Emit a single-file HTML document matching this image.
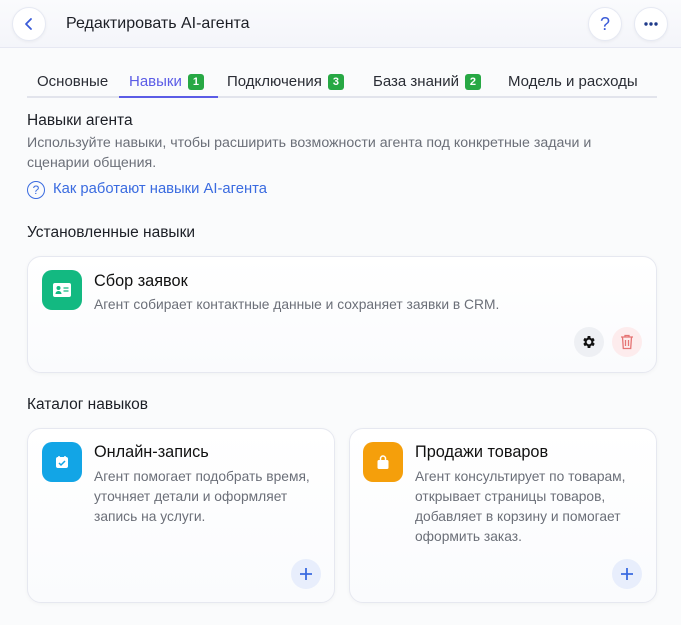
<!DOCTYPE html>
<html><head><meta charset="utf-8"><style>
*{box-sizing:border-box;margin:0;padding:0}
body{width:681px;height:625px;background:#fafbfc;font-family:"Liberation Sans",sans-serif;color:#1c1f26;position:relative;overflow:hidden}
.abs{position:absolute}
.hdr{left:0;top:0;width:681px;height:48px;background:linear-gradient(#fafbfd,#f4f5fa);border-bottom:1px solid #e6e8f2}
.cb{width:34px;height:34px;border-radius:50%;background:#fff;border:1px solid #e6e9f3;display:flex;align-items:center;justify-content:center;box-shadow:0 1px 3px rgba(0,0,0,.05)}
.t{white-space:nowrap}
.tab{top:73px;font-size:15px;color:#2a2d35}
.badge{display:inline-block;background:#27a844;color:#fff;font-size:11px;font-weight:bold;border-radius:3px;width:16px;height:16px;line-height:16px;text-align:center;margin-left:6px;vertical-align:1px}
.card{background:linear-gradient(#fff,#fafbfd);border:1px solid #e6e8f0;border-radius:14px;box-shadow:0 1px 4px rgba(0,0,0,.04)}
.ic{width:40px;height:40px;border-radius:10px;display:flex;align-items:center;justify-content:center}
.h{font-size:16.3px;color:#111}
.d{font-size:13.8px;color:#6b6f78;line-height:20px}
.rb{width:30px;height:30px;border-radius:50%;display:flex;align-items:center;justify-content:center}
</style></head><body>
<div class="abs hdr"></div>
<div class="abs cb" style="left:12px;top:7px"><svg width="14" height="14" viewBox="0 0 14 14"><path d="M9 2L4 7l5 5" fill="none" stroke="#3a5bd8" stroke-width="1.8" stroke-linecap="round" stroke-linejoin="round"/></svg></div>
<div class="abs t" style="left:66px;top:15px;font-size:16px;font-weight:500;color:#1c1f26">Редактировать AI-агента</div>
<div class="abs cb" style="left:588px;top:7px;color:#3a5bd8;font-size:18px">?</div>
<div class="abs cb" style="left:634px;top:7px"><svg width="14" height="4"><circle cx="2" cy="2" r="1.7" fill="#1e3a8a"/><circle cx="7" cy="2" r="1.7" fill="#1e3a8a"/><circle cx="12" cy="2" r="1.7" fill="#1e3a8a"/></svg></div>

<div class="abs t tab" style="left:37px">Основные</div>
<div class="abs t tab" style="left:129px;color:#5b5ce6">Навыки<span class="badge">1</span></div>
<div class="abs t tab" style="left:227px">Подключения<span class="badge">3</span></div>
<div class="abs t tab" style="left:373px">База знаний<span class="badge">2</span></div>
<div class="abs t tab" style="left:508px">Модель и расходы</div>
<div class="abs" style="left:27px;top:96px;width:630px;height:2px;background:#e2e4ec"></div>
<div class="abs" style="left:119px;top:96px;width:99px;height:2px;background:#5b5ce6"></div>

<div class="abs t" style="left:27px;top:112px;font-size:15.5px;font-weight:500">Навыки агента</div>
<div class="abs d" style="left:27px;top:133px;width:585px;font-size:14.2px">Используйте навыки, чтобы расширить возможности агента под конкретные задачи и сценарии общения.</div>
<div class="abs" style="left:27px;top:181px;width:18px;height:18px;border:1.3px solid #3a6be0;border-radius:50%;color:#3a6be0;font-size:12px;text-align:center;line-height:16px">?</div>
<div class="abs t" style="left:53px;top:181px;font-size:14.8px;color:#3a6be0">Как работают навыки AI-агента</div>

<div class="abs t" style="left:27px;top:224px;font-size:15.5px;font-weight:500">Установленные навыки</div>
<div class="abs card" style="left:27px;top:256px;width:630px;height:117px"></div>
<div class="abs ic" style="left:42px;top:270px;background:#13b981"><svg width="18" height="14"><rect x="0" y="0" width="18" height="14" rx="2" fill="#fff"/><circle cx="5.5" cy="5" r="2" fill="#13b981"/><path d="M2.5 11c0-2 1.5-3 3-3s3 1 3 3z" fill="#13b981"/><path d="M10.5 5h5M10.5 8h5" stroke="#13b981" stroke-width="1.3"/></svg></div>
<div class="abs t h" style="left:94px;top:272px">Сбор заявок</div>
<div class="abs t d" style="left:94px;top:295px">Агент собирает контактные данные и сохраняет заявки в CRM.</div>
<div class="abs rb" style="left:574px;top:327px;background:#eef0f4"><svg width="16" height="16" viewBox="0 0 24 24"><path fill="#111" d="M19.4 13a7.5 7.5 0 000-2l2.1-1.6-2-3.5-2.5 1a7.6 7.6 0 00-1.7-1L15 3h-4l-.4 2.9a7.6 7.6 0 00-1.7 1l-2.5-1-2 3.5L6.6 11a7.5 7.5 0 000 2l-2.1 1.6 2 3.5 2.5-1a7.6 7.6 0 001.7 1L11 21h4l.4-2.9a7.6 7.6 0 001.7-1l2.5 1 2-3.5zM13 15.5a3.5 3.5 0 110-7 3.5 3.5 0 010 7z" transform="translate(-1 0)"/></svg></div>
<div class="abs rb" style="left:612px;top:327px;background:#fdeced"><svg width="14" height="16" viewBox="0 0 14 16"><path d="M1 3h12M5 3V1.5h4V3M2.5 3l.8 11.5h7.4L11.5 3M5.5 6v6M8.5 6v6" fill="none" stroke="#e57373" stroke-width="1.3"/></svg></div>

<div class="abs t" style="left:27px;top:396px;font-size:15.5px;font-weight:500">Каталог навыков</div>
<div class="abs card" style="left:27px;top:428px;width:308px;height:175px"></div>
<div class="abs card" style="left:349px;top:428px;width:308px;height:175px"></div>
<div class="abs ic" style="left:42px;top:442px;background:#12a5e6"><svg width="14" height="14" viewBox="0 0 14 14"><rect x="1" y="2" width="12" height="11" rx="2" fill="#fff"/><path d="M4 1v2M10 1v2" stroke="#fff" stroke-width="1.5"/><path d="M4 8l2 2 4-4" fill="none" stroke="#12a5e6" stroke-width="1.5"/></svg></div>
<div class="abs t h" style="left:94px;top:443px">Онлайн-запись</div>
<div class="abs d" style="left:94px;top:467px;width:228px">Агент помогает подобрать время, уточняет детали и оформляет запись на услуги.</div>
<div class="abs ic" style="left:363px;top:442px;background:#f59f0b"><svg width="14" height="15" viewBox="0 0 14 15"><path d="M4.5 5V3.5a2.5 2.5 0 015 0V5" fill="none" stroke="#fff" stroke-width="1.5"/><rect x="1.5" y="5" width="11" height="9" rx="1.5" fill="#fff"/></svg></div>
<div class="abs t h" style="left:415px;top:443px">Продажи товаров</div>
<div class="abs d" style="left:415px;top:467px;width:232px">Агент консультирует по товарам, открывает страницы товаров, добавляет в корзину и помогает оформить заказ.</div>
<div class="abs rb" style="left:291px;top:559px;background:#e8eefc"><svg width="14" height="14"><path d="M7 1v12M1 7h12" stroke="#3a6be0" stroke-width="1.8"/></svg></div>
<div class="abs rb" style="left:612px;top:559px;background:#e8eefc"><svg width="14" height="14"><path d="M7 1v12M1 7h12" stroke="#3a6be0" stroke-width="1.8"/></svg></div>
</body></html>
